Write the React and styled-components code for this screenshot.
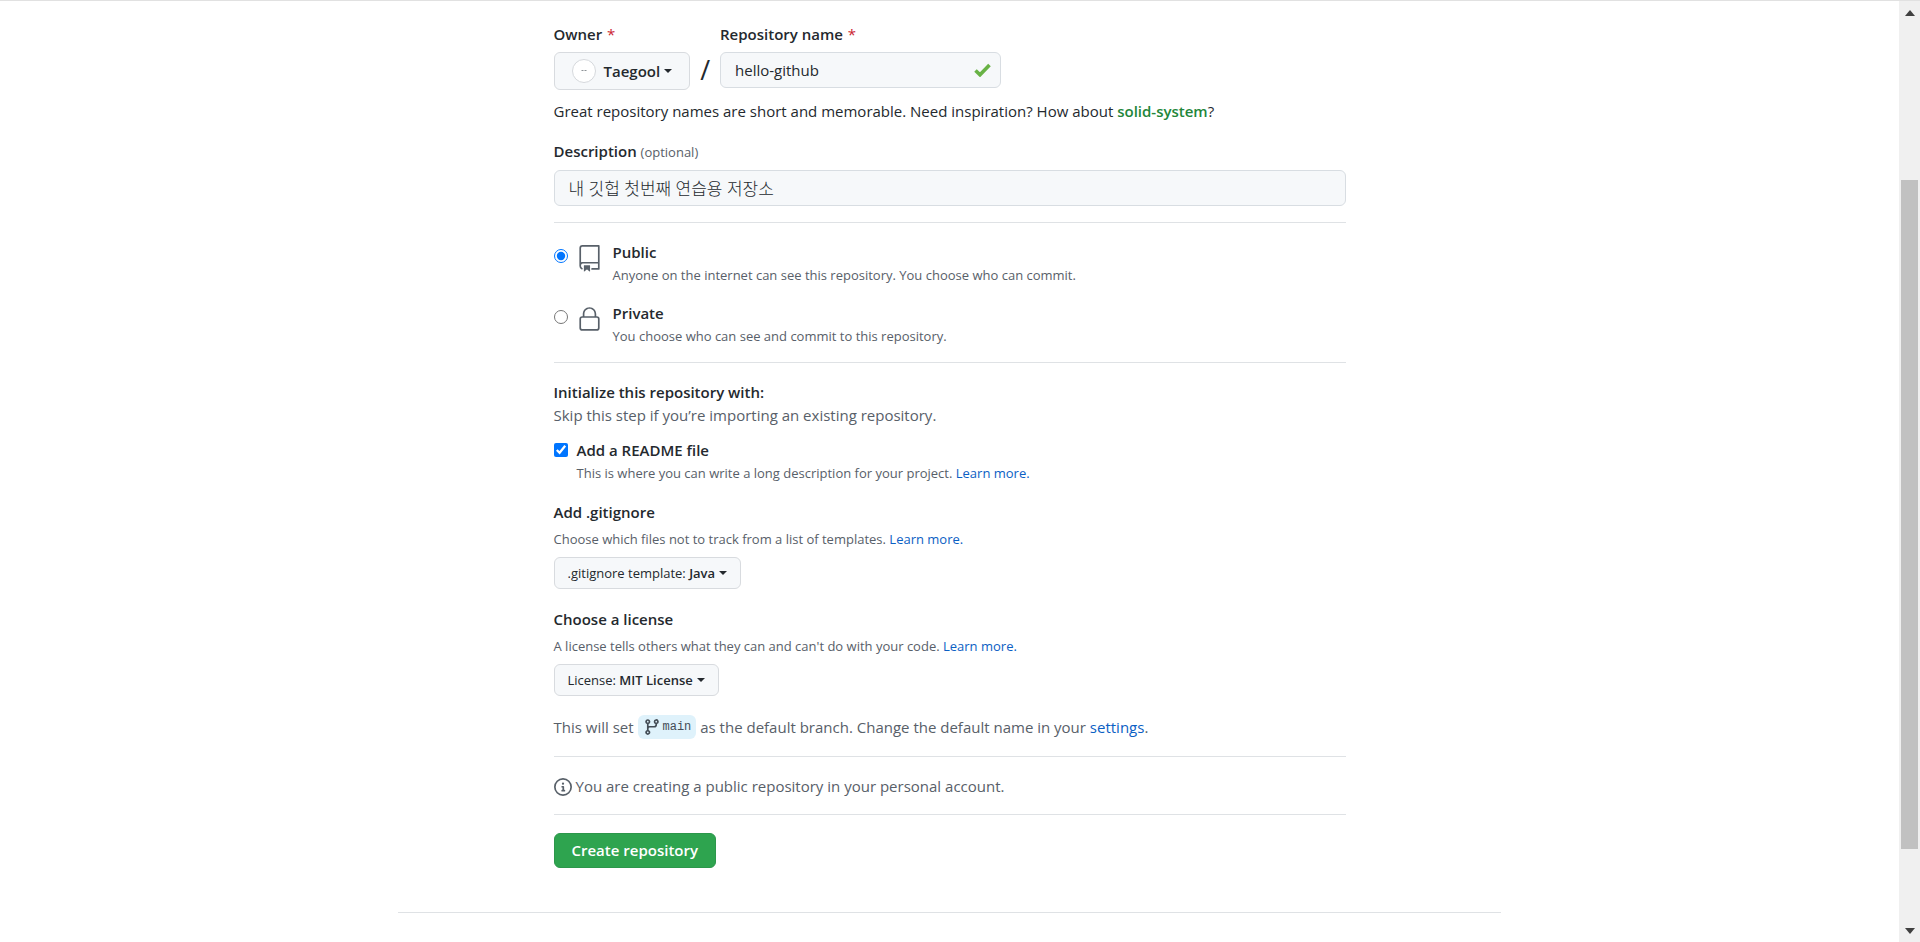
import React, { useState } from "react";
import styled, { createGlobalStyle } from "styled-components";

const App = () => {
  const [name, setName] = useState("hello-github");
  const [description, setDescription] = useState("내 깃헙 첫번째 연습용 저장소");
  const [visibility, setVisibility] = useState("public");
  const [readme, setReadme] = useState(true);

  return (
    <StyledWindow>
      <GlobalStyle />
      <Page>
        <Form onSubmit={(e) => e.preventDefault()}>
          <NameRow>
            <Field>
              <Label htmlFor="owner">
                Owner <Required>*</Required>
              </Label>
              <OwnerButton id="owner" type="button" aria-haspopup="menu">
                <Avatar />
                Taegool
                <Caret />
              </OwnerButton>
            </Field>
            <Slash>/</Slash>
            <Field>
              <Label htmlFor="repo-name">
                Repository name <Required>*</Required>
              </Label>
              <NameBox>
                <NameInput
                  id="repo-name"
                  value={name}
                  onChange={(e) => setName(e.target.value)}
                />
                <CheckIcon />
              </NameBox>
            </Field>
          </NameRow>
          <Hint>
            Great repository names are short and memorable. Need inspiration? How about{" "}
            <Suggestion>solid-system</Suggestion>?
          </Hint>

          <DescriptionField>
            <Label htmlFor="description">
              Description <Optional>(optional)</Optional>
            </Label>
            <DescriptionInput
              id="description"
              value={description}
              onChange={(e) => setDescription(e.target.value)}
            />
          </DescriptionField>
          <Divider />

          <Choices>
            <Choice>
              <Tick
                type="radio"
                name="visibility"
                id="public"
                checked={visibility === "public"}
                onChange={() => setVisibility("public")}
              />
              <RepoIcon />
              <div>
                <Label htmlFor="public">Public</Label>
                <Note>
                  Anyone on the internet can see this repository. You choose who can commit.
                </Note>
              </div>
            </Choice>
            <Choice>
              <Tick
                type="radio"
                name="visibility"
                id="private"
                checked={visibility === "private"}
                onChange={() => setVisibility("private")}
              />
              <LockIcon />
              <div>
                <Label htmlFor="private">Private</Label>
                <Note>You choose who can see and commit to this repository.</Note>
              </div>
            </Choice>
          </Choices>
          <Divider />

          <Section>
            <Title>Initialize this repository with:</Title>
            <Text>Skip this step if you’re importing an existing repository.</Text>
            <ReadmeRow>
              <Tick
                type="checkbox"
                id="readme"
                $box
                checked={readme}
                onChange={() => setReadme(!readme)}
              />
              <div>
                <Label htmlFor="readme">Add a README file</Label>
                <Note>
                  This is where you can write a long description for your project.{" "}
                  <Link href="#readme">Learn more.</Link>
                </Note>
              </div>
            </ReadmeRow>
          </Section>

          <Section>
            <Title>Add .gitignore</Title>
            <SpacedNote>
              Choose which files not to track from a list of templates.{" "}
              <Link href="#gitignore">Learn more.</Link>
            </SpacedNote>
            <MenuButton type="button" aria-haspopup="menu">
              .gitignore template: <strong>Java</strong>
              <Caret />
            </MenuButton>
          </Section>

          <Section>
            <Title>Choose a license</Title>
            <SpacedNote>
              A license tells others what they can and can't do with your code.{" "}
              <Link href="#license">Learn more.</Link>
            </SpacedNote>
            <MenuButton type="button" aria-haspopup="menu">
              License: <strong>MIT License</strong>
              <Caret />
            </MenuButton>
          </Section>

          <BranchText>
            This will set{" "}
            <Branch>
              <BranchIcon />
              main
            </Branch>{" "}
            as the default branch. Change the default name in your{" "}
            <Link href="#settings">settings</Link>.
          </BranchText>
          <Divider />
          <Info>
            <InfoIcon />
            You are creating a public repository in your personal account.
          </Info>
          <Divider />
          <Submit type="submit">Create repository</Submit>
        </Form>
        <Footer />
      </Page>
      <Scrollbar aria-hidden="true">
        <Arrow viewBox="0 0 10 6">
          <path d="M0 6L5 0L10 6Z" />
        </Arrow>
        <Track>
          <Thumb />
        </Track>
        <Arrow viewBox="0 0 10 6">
          <path d="M0 0L5 6L10 0Z" />
        </Arrow>
      </Scrollbar>
    </StyledWindow>
  );
};

const CheckIcon = () => (
  <StyledCheck viewBox="0 0 17 14">
    <path d="M1.5 7.5L6 11.8L15.5 2" fill="none" stroke="#68b245" strokeWidth="3.6" />
  </StyledCheck>
);

const RepoIcon = () => (
  <ChoiceIcon viewBox="0 0 24 24">
    <path
      fillRule="evenodd"
      d="M3 2.75A2.75 2.75 0 015.75 0h14.5a.75.75 0 01.75.75v20.5a.75.75 0 01-.75.75h-6a.75.75 0 010-1.5h5.25v-4H6A1.5 1.5 0 004.5 18v.75c0 .716.43 1.334 1.05 1.605a.75.75 0 01-.6 1.374A3.25 3.25 0 013 18.75v-16zM19.5 1.5V15H6c-.546 0-1.059.146-1.5.401V2.75c0-.69.56-1.25 1.25-1.25H19.5z"
    />
    <path d="M7 18.25a.25.25 0 01.25-.25h5a.25.25 0 01.25.25v5.01a.25.25 0 01-.397.201l-2.206-1.604a.25.25 0 00-.294 0L7.397 23.46a.25.25 0 01-.397-.2v-5.01z" />
  </ChoiceIcon>
);

const LockIcon = () => (
  <ChoiceIcon viewBox="0 0 24 24">
    <path
      fillRule="evenodd"
      d="M6 9V7.25C6 3.845 8.503 1 12 1s6 2.845 6 6.25V9h.5a2.5 2.5 0 012.5 2.5v8a2.5 2.5 0 01-2.5 2.5h-13A2.5 2.5 0 013 19.5v-8A2.5 2.5 0 015.5 9H6zm1.5-1.75C7.5 4.58 9.422 2.5 12 2.5c2.578 0 4.5 2.08 4.5 4.75V9h-9V7.25zm-3 4.25a1 1 0 011-1h13a1 1 0 011 1v8a1 1 0 01-1 1h-13a1 1 0 01-1-1v-8z"
    />
  </ChoiceIcon>
);

const BranchIcon = () => (
  <svg viewBox="0 0 16 16" width="18" height="18" fill="currentColor">
    <path
      fillRule="evenodd"
      d="M11.75 2.5a.75.75 0 100 1.5.75.75 0 000-1.5zm-2.25.75a2.25 2.25 0 113 2.122V6A2.5 2.5 0 0110 8.5H6a1 1 0 00-1 1v1.128a2.251 2.251 0 11-1.5 0V5.372a2.25 2.25 0 111.5 0v1.836A2.492 2.492 0 016 7h4a1 1 0 001-1v-.628A2.25 2.25 0 019.5 3.25zM4.25 12a.75.75 0 100 1.5.75.75 0 000-1.5zM3.5 3.25a.75.75 0 111.5 0 .75.75 0 01-1.5 0z"
    />
  </svg>
);

const InfoIcon = () => (
  <svg viewBox="0 0 16 16" width="18" height="18" fill="currentColor">
    <path
      fillRule="evenodd"
      d="M8 1.5a6.5 6.5 0 100 13 6.5 6.5 0 000-13zM0 8a8 8 0 1116 0A8 8 0 010 8zm6.5-.25A.75.75 0 017.25 7h1a.75.75 0 01.75.75v2.75h.25a.75.75 0 010 1.5h-2a.75.75 0 010-1.5h.25v-2h-.25a.75.75 0 01-.75-.75zM8 6a1 1 0 100-2 1 1 0 000 2z"
    />
  </svg>
);

const Avatar = () => (
  <StyledAvatar viewBox="0 0 24 24">
    <circle cx="12" cy="12" r="11.5" fill="#ffffff" stroke="#d5d8dc" />
    <path d="M9.5 11.5h2M12.5 11.5h2" stroke="#8d9297" />
  </StyledAvatar>
);

export default App;

const GlobalStyle = createGlobalStyle`
  * {
    box-sizing: border-box;
  }
  body {
    margin: 0;
    background-color: #ffffff;
    color: #24292e;
    font-family: "Open Sans", "Noto Sans CJK KR", sans-serif;
    font-size: 15px;
    line-height: 23px;
  }
  button, input {
    font-family: inherit;
    font-size: inherit;
    line-height: inherit;
    color: inherit;
  }
  p, h2 {
    margin: 0;
  }
`;

const StyledWindow = styled.div`
  display: flex;
  min-height: 100vh;
  border-top: 1px solid #e1e1e1;
`;

const Page = styled.main`
  flex: 1;
  min-width: 0;
  padding: 22px 16px 16px;
`;

const Form = styled.form`
  max-width: 792px;
  margin: 0 auto;
`;

const NameRow = styled.div`
  display: flex;
  align-items: flex-start;
`;

const Field = styled.div`
  display: flex;
  flex-direction: column;
  gap: 6px;
`;

const DescriptionField = styled(Field)`
  margin: 17px 0 16px;
`;

const Label = styled.label`
  display: block;
  font-weight: 600;
`;

const Required = styled.span`
  margin-left: 1px;
  color: #cb2431;
  font-weight: 400;
`;

const Optional = styled.span`
  color: #586069;
  font-size: 13px;
  font-weight: 400;
`;

const Button = styled.button`
  display: flex;
  align-items: center;
  border: 1px solid #d8dbdf;
  border-radius: 6px;
  background-color: #f6f8fa;
  white-space: pre;
  cursor: pointer;
`;

const OwnerButton = styled(Button)`
  height: 38px;
  padding: 0 17px;
  font-weight: 600;
`;

const StyledAvatar = styled.svg`
  width: 24px;
  height: 24px;
  margin-right: 8px;
`;

const Caret = styled.span`
  margin-left: 4px;
  border: 4px solid transparent;
  border-top-color: currentColor;
  border-bottom-width: 0;
`;

const Slash = styled.span`
  margin: 28px 8px 0;
  padding: 0 2px;
  font-size: 27px;
  line-height: 38px;
`;

const Input = styled.input`
  width: 100%;
  height: 36px;
  padding: 0 14px;
  border: 1px solid #d8dde2;
  border-radius: 6px;
  background-color: #f6f8fa;
`;

const NameBox = styled.div`
  position: relative;
  width: 281px;
`;

const NameInput = styled(Input)`
  padding-right: 40px;
`;

const DescriptionInput = styled(Input)`
  padding-bottom: 2px;
  font-size: 17px;
  font-weight: 300;
`;

const StyledCheck = styled.svg`
  position: absolute;
  top: 11px;
  right: 10px;
  width: 17px;
  height: 14px;
`;

const Hint = styled.p`
  margin-top: 10px;
`;

const Suggestion = styled.strong`
  color: #22863a;
  font-weight: 600;
`;

const Divider = styled.hr`
  height: 1px;
  margin: 14px 0 18px;
  border: 0;
  background-color: #dfe2e5;
`;

const Choices = styled.div`
  display: flex;
  flex-direction: column;
  gap: 15px;
`;

const Choice = styled.div`
  display: flex;
  align-items: flex-start;
`;

const Tick = styled.input`
  flex: none;
  width: 14px;
  height: 14px;
  margin: ${(props) => (props.$box ? "4px 9px 0 0" : "8px 5px 0 0")};
`;

const ChoiceIcon = styled.svg`
  flex: none;
  width: 27px;
  height: 27px;
  margin: 4px 10px 0 3px;
  fill: #586069;
`;

const Note = styled.p`
  color: #586069;
  font-size: 13px;
`;

const SpacedNote = styled(Note)`
  margin: 4px 0 6px;
`;

const Text = styled.p`
  color: #586069;
`;

const Link = styled.a`
  color: #0b60c4;
  text-decoration: none;
`;

const Section = styled.section`
  & + & {
    margin-top: 16px;
  }
`;

const Title = styled.h2`
  font-size: 15px;
  font-weight: 600;
`;

const ReadmeRow = styled(Choice)`
  margin-top: 12px;
`;

const MenuButton = styled(Button)`
  height: 32px;
  margin-bottom: 19px;
  padding: 0 13px;
  font-size: 13px;
  strong {
    font-weight: 600;
  }
`;

const BranchText = styled(Text)`
  margin-bottom: 17px;
  line-height: 24px;
`;

const Branch = styled.code`
  display: inline-flex;
  align-items: center;
  gap: 2px;
  height: 24px;
  padding: 0 5px;
  border-radius: 6px;
  background-color: #dff2fb;
  color: #444d56;
  font-family: "Liberation Mono", monospace;
  font-size: 12px;
  vertical-align: top;
`;

const Info = styled.p`
  display: flex;
  align-items: center;
  gap: 4px;
  margin-bottom: 16px;
  color: #586069;
`;

const Submit = styled.button`
  height: 35px;
  padding: 0 17px;
  border: 1px solid #2c974b;
  border-radius: 6px;
  background-color: #2ea44f;
  color: #ffffff;
  font-weight: 600;
  cursor: pointer;
`;

const Footer = styled.footer`
  max-width: 1103px;
  margin: 44px auto 0;
  border-top: 1px solid #dfe2e5;
`;

const Scrollbar = styled.div`
  flex: none;
  display: flex;
  flex-direction: column;
  align-items: center;
  width: 21px;
  padding: 9px 0 8px;
  background-color: #f0f0f0;
`;

const Arrow = styled.svg`
  width: 10px;
  height: 6px;
  fill: #404040;
`;

const Track = styled.div`
  flex: 1;
  display: flex;
  flex-direction: column;
  width: 17px;
  &::before {
    content: "";
    flex: 164;
  }
  &::after {
    content: "";
    flex: 79;
  }
`;

const Thumb = styled.div`
  flex: 671;
  background-color: #c1c1c1;
`;
